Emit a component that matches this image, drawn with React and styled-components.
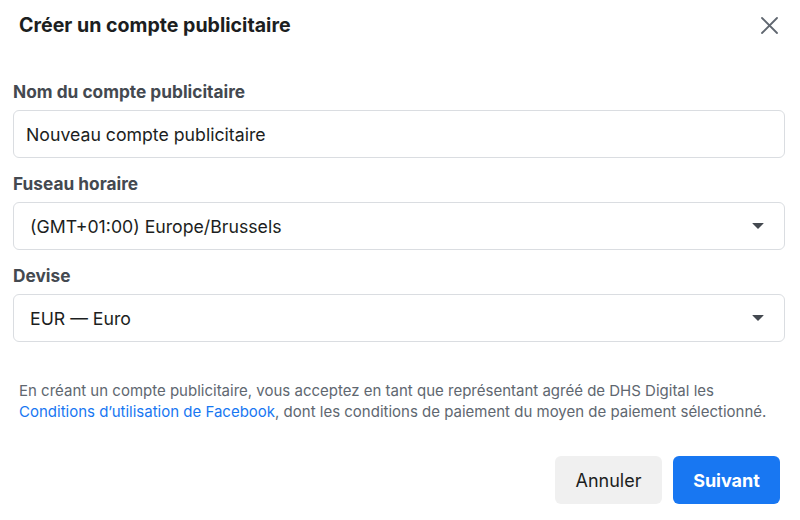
import React from "react";
import styled, { createGlobalStyle } from "styled-components";

const Global = createGlobalStyle`
  html, body { margin: 0; padding: 0; background: #fff; }
  body { font-family: Inter, Roboto, "Liberation Sans", Arial, sans-serif; -webkit-font-smoothing: antialiased; }
  * { box-sizing: border-box; }
`;

const Dialog = styled.div`
  width: 800px;
  height: 520px;
  background: #fff;
  display: flex;
  flex-direction: column;
`;

const Header = styled.div`
  display: flex;
  align-items: center;
  justify-content: space-between;
  height: 50px;
  padding: 0 22px 0 19px;
`;

const Title = styled.h1`
  margin: 0;
  font-size: 19.6px;
  line-height: 24px;
  font-weight: 700;
  color: #1c1e21;
`;

const CloseButton = styled.button`
  border: 0;
  background: none;
  padding: 0;
  width: 18px;
  height: 18px;
  display: flex;
  align-items: center;
  justify-content: center;
  cursor: pointer;
`;

const Form = styled.div`
  display: flex;
  flex-direction: column;
  gap: 16px;
  padding: 32px 15px 0 13px;
`;

const Field = styled.div`
  display: flex;
  flex-direction: column;
`;

const Label = styled.label`
  font-size: 17.3px;
  line-height: 20px;
  font-weight: 700;
  color: #444950;
  margin-bottom: 8px;
`;

const Box = styled.div`
  height: 48px;
  border: 1px solid #dadde1;
  border-radius: 6px;
  display: flex;
  align-items: center;
  justify-content: space-between;
  padding: 0 ${(p) => (p.$select ? "20px" : "12px")} 0 ${(p) => (p.$select ? "16px" : "12px")};
  font-size: 17.7px;
  color: #1c1e21;
  background: #fff;
`;

const Caret = styled.span`
  display: block;
  width: 0;
  height: 0;
  border-left: 6px solid transparent;
  border-right: 6px solid transparent;
  border-top: 6px solid #444950;
  border-radius: 1px;
`;

const Notice = styled.p`
  margin: 38px 0 0;
  padding: 0 19px;
  font-size: 15px;
  line-height: 21px;
  color: #606770;
`;

const Link = styled.a`
  color: #1877f2;
  text-decoration: none;
`;

const Footer = styled.div`
  display: flex;
  justify-content: flex-end;
  gap: 11px;
  padding: 0 20px;
  margin-top: 34px;
`;

const Button = styled.button`
  width: 107px;
  height: 48px;
  border: 0;
  border-radius: 6px;
  font-family: inherit;
  font-size: 18px;
  font-weight: ${(p) => (p.$primary ? 700 : 400)};
  color: ${(p) => (p.$primary ? "#fff" : "#1c1e21")};
  background: ${(p) => (p.$primary ? "#1877f2" : "#f0f0f0")};
  cursor: pointer;
`;

function SelectBox({ value }) {
  return (
    <Box $select>
      <span>{value}</span>
      <Caret />
    </Box>
  );
}

export default function App() {
  return (
    <>
      <Global />
      <Dialog>
        <Header>
          <Title>Créer un compte publicitaire</Title>
          <CloseButton aria-label="Fermer">
            <svg width="17" height="17" viewBox="0 0 17 17">
              <path d="M1 1 L16 16 M16 1 L1 16" stroke="#606770" strokeWidth="1.8" strokeLinecap="round" />
            </svg>
          </CloseButton>
        </Header>
        <Form>
          <Field>
            <Label>Nom du compte publicitaire</Label>
            <Box>Nouveau compte publicitaire</Box>
          </Field>
          <Field>
            <Label>Fuseau horaire</Label>
            <SelectBox value="(GMT+01:00) Europe/Brussels" />
          </Field>
          <Field>
            <Label>Devise</Label>
            <SelectBox value="EUR — Euro" />
          </Field>
        </Form>
        <Notice>
          En créant un compte publicitaire, vous acceptez en tant que représentant agréé de DHS Digital les{" "}
          <Link href="#">Conditions d’utilisation de Facebook</Link>, dont les conditions de paiement du moyen de paiement sélectionné.
        </Notice>
        <Footer>
          <Button>Annuler</Button>
          <Button $primary>Suivant</Button>
        </Footer>
      </Dialog>
    </>
  );
}
